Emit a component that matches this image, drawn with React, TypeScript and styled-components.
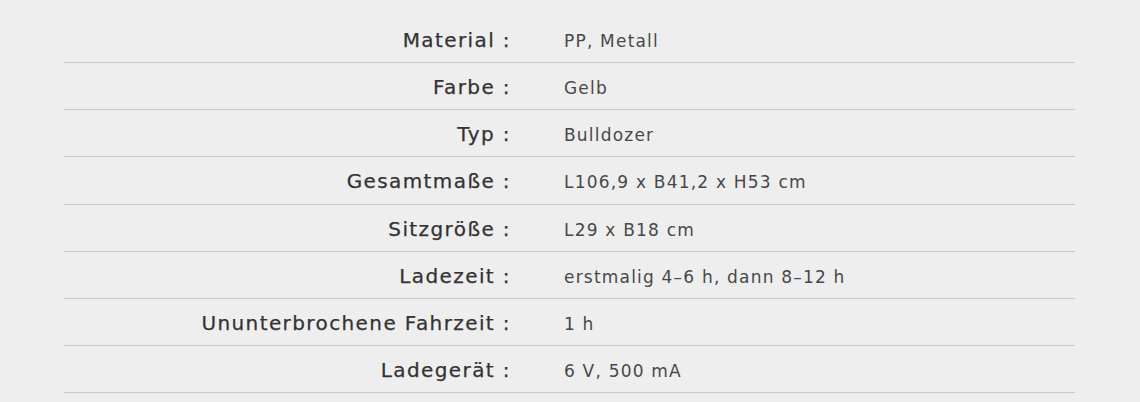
import React from "react";
import styled, { createGlobalStyle } from "styled-components";

const GlobalStyle = createGlobalStyle`
  body {
    margin: 0;
    background: #eeeeee;
    font-family: "DejaVu Sans", "Liberation Sans", sans-serif;
  }
`;

const Wrapper = styled.div`
  padding: 16px 65px 0 64px;
`;

const Row = styled.div`
  box-sizing: border-box;
  height: 47.14px;
  padding-top: 12px;
  display: flex;
  align-items: baseline;
  border-bottom: 1px solid #c9c9c9;
`;

const Label = styled.div`
  flex: 0 0 447px;
  text-align: right;
  font-size: 20px;
  letter-spacing: 1.4px;
  color: #333;
  -webkit-text-stroke: 0.25px #333;
  white-space: nowrap;
`;

const Value = styled.div`
  padding-left: 53px;
  font-size: 17px;
  letter-spacing: 1.2px;
  color: #484848;
  white-space: nowrap;
`;

type Spec = { label: string; value: string };

const specs: Spec[] = [
  { label: "Material", value: "PP, Metall" },
  { label: "Farbe", value: "Gelb" },
  { label: "Typ", value: "Bulldozer" },
  { label: "Gesamtmaße", value: "L106,9 x B41,2 x H53 cm" },
  { label: "Sitzgröße", value: "L29 x B18 cm" },
  { label: "Ladezeit", value: "erstmalig 4–6 h, dann 8–12 h" },
  { label: "Ununterbrochene Fahrzeit", value: "1 h" },
  { label: "Ladegerät", value: "6 V, 500 mA" },
];

const App = () => (
  <>
    <GlobalStyle />
    <Wrapper>
      {specs.map((s) => (
        <Row key={s.label}>
          <Label>{s.label} :</Label>
          <Value>{s.value}</Value>
        </Row>
      ))}
    </Wrapper>
  </>
);

export default App;
